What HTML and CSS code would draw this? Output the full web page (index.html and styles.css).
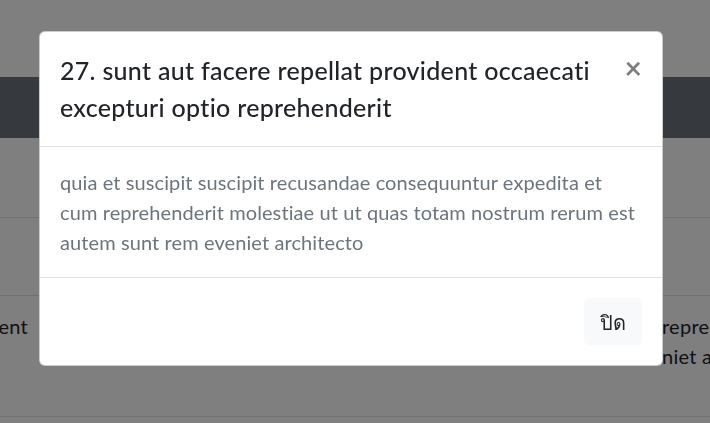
FILE: index.html
```html
<html>

<head>
  <meta name="viewport" content="width=device-width, initial-scale=1">
  <link rel="stylesheet" href="styles.css">
</head>

<body>
  <header class="top"></header>
  <nav class="navbar"></nav>

  <div class="table">
    <div class="row row-head"></div>
    <div class="row row-sm"></div>
    <div class="row row-lg">
      <div class="cell cell-left"><span>provident</span></div>
      <div class="cell cell-mid"></div>
      <div class="cell cell-right">reprehenderit<br>niet architecto</div>
    </div>
  </div>

  <div class="backdrop"></div>

  <div class="modal">
    <div class="modal-dialog">
      <div class="modal-content">
        <div class="modal-header">
          <h5 class="modal-title">27. sunt aut facere repellat provident occaecati excepturi optio reprehenderit</h5>
          <button class="close" type="button">&times;</button>
        </div>
        <div class="modal-body">
          <p>quia et suscipit suscipit recusandae consequuntur expedita et cum reprehenderit molestiae ut ut quas totam nostrum rerum est autem sunt rem eveniet architecto</p>
        </div>
        <div class="modal-footer">
          <button class="btn btn-light" type="button">ปิด</button>
        </div>
      </div>
    </div>
  </div>
</body>

</html>
```

FILE: styles.css
```css
  body {
    margin: 0;
    background: #ffffff;
    color: #212529;
    font-family: Lato, "Noto Sans", "DejaVu Sans", sans-serif;
    font-size: 20px;
    line-height: 30px;
  }

  .top {
    height: 77px;
  }

  .navbar {
    height: 61px;
    background-color: #6c757d;
  }

  /* table of posts behind the modal */
  .row {
    display: flex;
    border-top: 1px solid #dee2e6;
  }

  .row-head {
    height: 79px;
    border-top: 0;
  }

  .row-sm {
    height: 77px;
  }

  .row-lg {
    height: 120px;
    border-bottom: 1px solid #dee2e6;
  }

  .cell {
    padding: 15px 0;
    white-space: nowrap;
    overflow: hidden;
    letter-spacing: 0.25px;
  }

  .cell-left {
    width: 28px;
    display: flex;
    justify-content: flex-end;
  }

  .cell-mid {
    flex: 1;
  }

  .cell-right {
    width: 48px;
    padding-left: 1px;
  }

  .backdrop {
    position: fixed;
    inset: 0;
    background-color: rgba(0, 0, 0, 0.5);
  }

  /* modal */
  .modal {
    position: fixed;
    inset: 0;
  }

  .modal-dialog {
    width: 624px;
    margin: 31px 0 0 39px;
  }

  .modal-content {
    background-color: #ffffff;
    border: 1px solid rgba(0, 0, 0, 0.2);
    border-radius: 6px;
    overflow: hidden;
  }

  .modal-header {
    display: flex;
    align-items: flex-start;
    padding: 20px;
    border-bottom: 1px solid #dee2e6;
  }

  .modal-title {
    margin: 0;
    font-size: 25px;
    line-height: 37px;
    font-weight: 500;
    letter-spacing: 0.3px;
    color: #212529;
  }

  .close {
    margin: -20px -20px -20px auto;
    padding: 20px;
    background: transparent;
    border: 0;
    font-family: inherit;
    font-size: 30px;
    line-height: 30px;
    font-weight: 700;
    color: #000000;
    opacity: 0.5;
  }

  .modal-body {
    padding: 20px;
  }

  .modal-body p {
    margin: 0;
    color: #6c757d;
    letter-spacing: 0.1px;
  }

  .modal-footer {
    display: flex;
    justify-content: flex-end;
    padding: 15px;
    border-top: 1px solid #dee2e6;
  }

  .btn {
    margin: 5px;
    padding: 7.5px 15px;
    font-family: inherit;
    font-size: 20px;
    line-height: 30px;
    border-radius: 5px;
  }

  .btn-light {
    color: #212529;
    background-color: #f8f9fa;
    border: 1px solid #f8f9fa;
  }
```
